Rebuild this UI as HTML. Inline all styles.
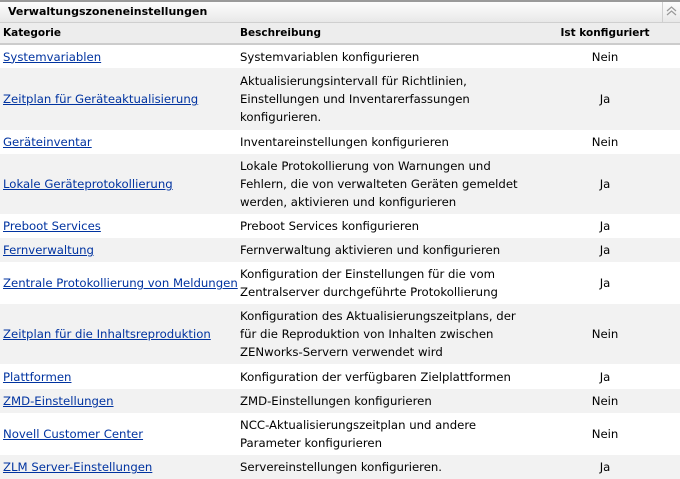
<!DOCTYPE html>
<html><head><meta charset="utf-8"><style>
*{margin:0;padding:0;box-sizing:border-box}
body{width:680px;height:477px;overflow:hidden;background:#fff;font-family:"DejaVu Sans","Liberation Sans",sans-serif;font-size:11.7px;color:#000}
.title{position:absolute;left:0;top:0;width:680px;height:23px;border-top:2px solid #9a9a9a;border-bottom:1px solid #cfcfcf;background:linear-gradient(#fdfdfd,#e8e8e8)}
.title span{position:absolute;left:8px;top:3px;font-weight:bold;font-size:11px}
.title .ic{position:absolute;left:662px;top:0;width:18px;height:21px;border-left:1px solid #cfcfcf}
.hdr{position:absolute;top:23px;left:0;width:680px;height:22px;background:#ededed;border-bottom:2px solid #ccc;font-weight:bold;font-size:10.5px}
.r{position:absolute;left:0;width:680px;display:flex;align-items:center;white-space:nowrap;line-height:18px}
.g{background:#f2f2f2}
.c1{position:absolute;left:3px}
.c2{position:absolute;left:240px}
.c3{position:absolute;left:530px;width:150px;text-align:center}
a{color:#0033a0;text-decoration:underline}
</style></head><body>
<div class="title"><span>Verwaltungszoneneinstellungen</span><div class="ic"><svg width="17" height="20" viewBox="0 0 17 20"><path d="M4 9 L8.5 5 L13 9 M4 13 L8.5 9 L13 13" fill="none" stroke="#999" stroke-width="1.2"/></svg></div></div>
<div class="r hdr" style="top:23px;height:22px"><span class="c1">Kategorie</span><span class="c2">Beschreibung</span><span class="c3">Ist konfiguriert</span></div>
<div class="r" style="top:45px;height:23px"><a class="c1">Systemvariablen</a><span class="c2">Systemvariablen konfigurieren</span><span class="c3">Nein</span></div>
<div class="r g" style="top:68px;height:62px"><a class="c1">Zeitplan für Geräteaktualisierung</a><span class="c2">Aktualisierungsintervall für Richtlinien,<br>Einstellungen und Inventarerfassungen<br>konfigurieren.</span><span class="c3">Ja</span></div>
<div class="r" style="top:130px;height:24px"><a class="c1">Geräteinventar</a><span class="c2">Inventareinstellungen konfigurieren</span><span class="c3">Nein</span></div>
<div class="r g" style="top:154px;height:60px"><a class="c1">Lokale Geräteprotokollierung</a><span class="c2">Lokale Protokollierung von Warnungen und<br>Fehlern, die von verwalteten Geräten gemeldet<br>werden, aktivieren und konfigurieren</span><span class="c3">Ja</span></div>
<div class="r" style="top:214px;height:24px"><a class="c1">Preboot Services</a><span class="c2">Preboot Services konfigurieren</span><span class="c3">Ja</span></div>
<div class="r g" style="top:238px;height:24px"><a class="c1">Fernverwaltung</a><span class="c2">Fernverwaltung aktivieren und konfigurieren</span><span class="c3">Ja</span></div>
<div class="r" style="top:262px;height:42px"><a class="c1">Zentrale Protokollierung von Meldungen</a><span class="c2">Konfiguration der Einstellungen für die vom<br>Zentralserver durchgeführte Protokollierung</span><span class="c3">Ja</span></div>
<div class="r g" style="top:304px;height:60px"><a class="c1">Zeitplan für die Inhaltsreproduktion</a><span class="c2">Konfiguration des Aktualisierungszeitplans, der<br>für die Reproduktion von Inhalten zwischen<br>ZENworks-Servern verwendet wird</span><span class="c3">Nein</span></div>
<div class="r" style="top:364px;height:25px"><a class="c1">Plattformen</a><span class="c2">Konfiguration der verfügbaren Zielplattformen</span><span class="c3">Ja</span></div>
<div class="r g" style="top:389px;height:24px"><a class="c1">ZMD-Einstellungen</a><span class="c2">ZMD-Einstellungen konfigurieren</span><span class="c3">Nein</span></div>
<div class="r" style="top:413px;height:42px"><a class="c1">Novell Customer Center</a><span class="c2">NCC-Aktualisierungszeitplan und andere<br>Parameter konfigurieren</span><span class="c3">Nein</span></div>
<div class="r g" style="top:455px;height:24px"><a class="c1">ZLM Server-Einstellungen</a><span class="c2">Servereinstellungen konfigurieren.</span><span class="c3">Ja</span></div>
</body></html>
